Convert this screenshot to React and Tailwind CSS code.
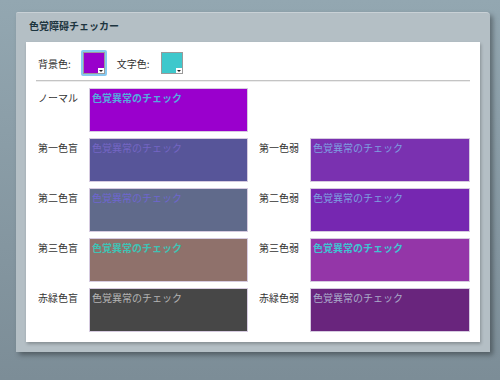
import React from "react";

const font = { fontFamily: '"Noto Sans CJK JP", "Noto Sans", sans-serif' };

function Swatch({ color, size, focused }) {
  const inner = (
    <div
      className="relative border border-[#9a9a9a]"
      style={{ width: size, height: size, background: color }}
    >
      <div className="absolute right-0 bottom-0 w-[6px] h-[5px] bg-white flex items-center justify-center">
        <div className="w-0 h-0 border-l-[2px] border-r-[2px] border-t-[2px] border-l-transparent border-r-transparent border-t-[#222]" />
      </div>
    </div>
  );
  if (focused) {
    return (
      <div className="p-[2px] bg-[#86c9f0] rounded-[2px]">{inner}</div>
    );
  }
  return inner;
}

function Box({ bg, fg, bold, w }) {
  return (
    <div
      className="h-[44px] border border-[#d6cbe0] pl-[2px] pt-[2px] text-[10px] leading-[14px]"
      style={{ background: bg, color: fg, width: w, fontWeight: bold ? 700 : 400 }}
    >
      色覚異常のチェック
    </div>
  );
}

function Cell({ label, bg, fg, bold, w }) {
  return (
    <div className="flex">
      <div className="w-[51px] pt-[3px] text-[10px] leading-[14px] text-[#333]">{label}</div>
      <Box bg={bg} fg={fg} bold={bold} w={w} />
    </div>
  );
}

const rows = [
  [
    { label: "第一色盲", bg: "#575599", fg: "#7466c4" },
    { label: "第一色弱", bg: "#7a31b0", fg: "#7e9fe0" },
  ],
  [
    { label: "第二色盲", bg: "#606a8b", fg: "#6e66cf" },
    { label: "第二色弱", bg: "#7627b1", fg: "#7d9fe0" },
  ],
  [
    { label: "第三色盲", bg: "#8f716b", fg: "#3fc2b4", bold: true },
    { label: "第三色弱", bg: "#9436a8", fg: "#3fc3d2", bold: true },
  ],
  [
    { label: "赤緑色盲", bg: "#474747", fg: "#b4b4b4" },
    { label: "赤緑色弱", bg: "#69257d", fg: "#a9abca" },
  ],
];

export default function App() {
  return (
    <div
      className="w-[500px] h-[380px] bg-gradient-to-b from-[#93a7b1] to-[#7c8d97] pt-[12px] pl-[16px]"
      style={font}
    >
      <div className="w-[474px] h-[340px] bg-[#b4bfc5] rounded-tr-[4px] rounded-tl-[2px] border-t border-[#c9d1d6] shadow-[3px_3px_5px_rgba(0,0,0,0.35)] flex flex-col">
        <div className="h-[29px] pl-[13px] pt-[6px] text-[10px] leading-[14px] font-bold text-[#1d3540]">
          色覚障碍チェッカー
        </div>
        <div className="mx-[10px] h-[300px] bg-white shadow-[1px_2px_3px_rgba(0,0,0,0.25)] px-[10px] pt-[8px]">
          <div className="flex items-center h-[26px] pl-[2px] text-[10px] text-[#333]">
            <span>背景色:</span>
            <div className="ml-[10px]">
              <Swatch color="#9900cc" size={22} focused />
            </div>
            <span className="ml-[10px]">文字色:</span>
            <div className="ml-[11px]">
              <Swatch color="#3ec8cc" size={22} />
            </div>
          </div>
          <div className="mt-[4px] h-[2px] border-t border-[#c4c4c4] bg-[#ececec]" />
          <div className="mt-[6px] pl-[2px] flex flex-col gap-[6px]">
            <Cell label="ノーマル" bg="#9a00cd" fg="#55a9de" bold w={159} />
            {rows.map((r, i) => (
              <div key={i} className="flex gap-[11px]">
                <Cell {...r[0]} w={159} />
                <Cell {...r[1]} w={160} />
              </div>
            ))}
          </div>
        </div>
      </div>
    </div>
  );
}
